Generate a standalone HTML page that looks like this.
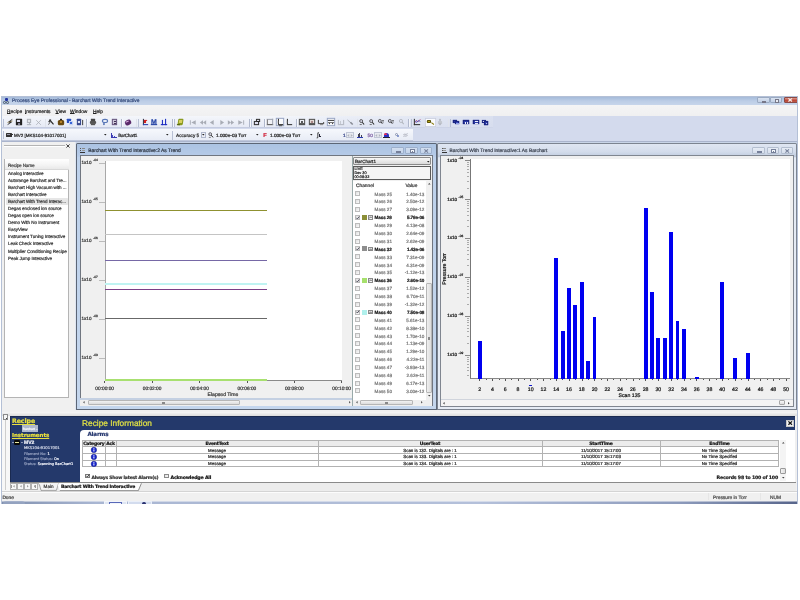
<!DOCTYPE html>
<html><head><meta charset="utf-8"><title>Process Eye Professional</title>
<style>
html,body{margin:0;padding:0;background:#fff;}
body{width:800px;height:600px;position:relative;overflow:hidden;font-family:"Liberation Sans",sans-serif;font-size:4.8px;color:#333;-webkit-text-stroke:0.2px;text-rendering:geometricPrecision;}
div{position:absolute;box-sizing:border-box;}
.t{white-space:nowrap;line-height:6px;margin-top:-1.94px;}
.tc{white-space:nowrap;line-height:6px;margin-top:-1.94px;transform:translateX(-50%);}
.tr{white-space:nowrap;line-height:6px;margin-top:-1.94px;transform:translateX(-100%);}
.b{font-weight:bold;}
svg{position:absolute;overflow:visible;}
</style></head><body>
<div id="app" style="left:0;top:0;width:800px;height:600px;will-change:transform;clip-path:inset(96.2px 2.3px 96px 1px);">

<div style="left:0px;top:96px;width:800px;height:408px;background:#d3daed;"></div>
<div style="left:0px;top:96px;width:800px;height:9.5px;background:linear-gradient(#9fb6d6,#bccde6 50%,#c9d7ec);"></div>
<div class="t" style="left:12px;top:100.94px;font-size:4.9px;color:#33497a;">Process Eye Professional - Barchart With Trend Interactive</div>
<div style="left:3px;top:98px;width:6px;height:6px;"><div style="left:2px;top:0;width:2.5px;height:3px;background:#2030a0;border-radius:1px"></div><div style="left:0;top:3px;width:2.5px;height:2.5px;border:0.7px solid #456;border-radius:50%"></div><div style="left:3.2px;top:3px;width:2.5px;height:2.5px;border:0.7px solid #456;border-radius:50%"></div></div>
<div style="left:757px;top:97px;width:12.6px;height:6.2px;background:linear-gradient(#d8e2f0,#c2d0e6);border:0.6px solid #9aaac2;border-radius:1px;"><div style="left:3.8px;top:2.8px;width:4.6px;height:1.8px;background:#f4f6fa;border:0.5px solid #778"></div></div>
<div style="left:769.8px;top:97px;width:12.6px;height:6.2px;background:linear-gradient(#d8e2f0,#c2d0e6);border:0.6px solid #9aaac2;border-radius:1px;"><div style="left:4px;top:1px;width:4.4px;height:3.8px;background:#e8ecf4;border:0.6px solid #778"></div></div>
<div style="left:783.6px;top:97px;width:14px;height:6.2px;background:linear-gradient(#dc9a8c,#c8584a 45%,#b84434 55%,#c05a48);border:0.6px solid #8a4a46;border-radius:1px;"></div>
<svg style="left:788.4px;top:98.3px" width="4.4" height="3.8" viewBox="0 0 4.4 3.8"><path d="M0.4 0.3L4 3.5M4 0.3L0.4 3.5" stroke="#f6f0ee" stroke-width="1.1"/></svg>
<div style="left:1px;top:105px;width:798px;height:10.8px;background:linear-gradient(#f4f4f5,#f0f0f1);"></div>
<div class="t" style="left:7px;top:111.94px;color:#222;font-size:4.9px"><span style="text-decoration:underline;text-decoration-thickness:0.45px;text-underline-offset:0.3px">R</span>ecipe</div>
<div class="t" style="left:25px;top:111.94px;color:#222;font-size:4.9px"><span style="text-decoration:underline;text-decoration-thickness:0.45px;text-underline-offset:0.3px">I</span>nstruments</div>
<div class="t" style="left:55.5px;top:111.94px;color:#222;font-size:4.9px"><span style="text-decoration:underline;text-decoration-thickness:0.45px;text-underline-offset:0.3px">V</span>iew</div>
<div class="t" style="left:70px;top:111.94px;color:#222;font-size:4.9px"><span style="text-decoration:underline;text-decoration-thickness:0.45px;text-underline-offset:0.3px">W</span>indow</div>
<div class="t" style="left:93px;top:111.94px;color:#222;font-size:4.9px"><span style="text-decoration:underline;text-decoration-thickness:0.45px;text-underline-offset:0.3px">H</span>elp</div>
<div style="left:1px;top:116.4px;width:491.5px;height:12.1px;background:linear-gradient(#f4f6fb,#e6eaf5);border-bottom:0.5px solid #c4cbe0;border-radius:0 0 1px 0"></div>
<div style="left:1px;top:129px;width:412px;height:12px;background:linear-gradient(#f6f8fc,#e8ecf6);border-bottom:0.5px solid #c0c8dc;"></div>
<div style="left:1px;top:116.4px;width:491.5px;height:12.1px;background:linear-gradient(90deg,rgba(214,220,238,0) 0,rgba(214,220,238,0) 55%,rgba(210,217,236,.75) 100%)"></div>
<div style="left:2.5px;top:119px;width:0.6px;height:8px;background:#b8c0d4"></div>
<div style="left:2.5px;top:131px;width:0.6px;height:8px;background:#b8c0d4"></div>
<div style="left:9.5px;top:122.3px;width:0;height:0;transform:scale(1.05)">
<svg style="left:-3px;top:-3px" width="6" height="6" viewBox="0 0 6 6"><path d="M5.2 0.2 L1.4 3 L2.8 3.3 L0.6 5.8 L4.8 3 L3.4 2.7 Z" fill="#222" stroke="#222" stroke-width="0.25"/><path d="M0.4 3.6 L5.6 2" stroke="#8a7030" stroke-width="0.5"/></svg>
</div>
<div style="left:19px;top:122.3px;width:0;height:0;transform:scale(1.05)">
<div style="left:-2.8px;top:-2.8px;width:5.6px;height:5.6px;background:#222;border-radius:0.5px"><div style="left:1.2px;top:0.4px;width:3px;height:2px;background:#dde"></div><div style="left:1.5px;top:3.6px;width:2.4px;height:1.8px;background:#889"></div></div>
</div>
<div style="left:28.5px;top:122.3px;width:0;height:0;transform:scale(1.05)">
<div style="left:-2px;top:-2.8px;width:4px;height:3.4px;border:0.8px solid #b0b4bc;background:#e4e6ea"></div>
<div style="left:-0.4px;top:0.6px;width:0.8px;height:1.6px;background:#b0b4bc"></div>
<div style="left:-1.6px;top:2.1px;width:3.2px;height:0.7px;background:#b0b4bc"></div>
</div>
<div style="left:38px;top:122.3px;width:0;height:0;transform:scale(1.05)">
<svg style="left:-2.5px;top:-2.5px" width="5" height="5" viewBox="0 0 5 5"><path d="M0.3 0.3L4.7 4.7M4.7 0.3L0.3 4.7" stroke="#a8acb4" stroke-width="0.7"/></svg>
</div>
<div style="left:51px;top:122.3px;width:0;height:0;transform:scale(1.05)">
<svg style="left:-3px;top:-3px" width="6" height="6" viewBox="0 0 6 6"><path d="M1.5 0.8 L5.4 5.2" stroke="#222" stroke-width="1.1"/><path d="M0.3 2.6 L2.6 0.4 L3.4 1.2 L1.2 3.5Z" fill="#333"/><path d="M2.2 3 L0.6 5.6" stroke="#555" stroke-width="0.8"/></svg>
</div>
<div style="left:60.5px;top:122.3px;width:0;height:0;transform:scale(1.05)">
<div style="left:-2.8px;top:-2.2px;width:5.6px;height:5px;background:#6a4a10;border-radius:1.5px 1.5px 1px 1px"><div style="left:1.6px;top:1px;width:2.4px;height:2px;background:#c89030;border-radius:1px"></div></div>
<div style="left:-0.9px;top:-3px;width:1.8px;height:1.2px;background:#222;border-radius:0.6px"></div>
</div>
<div style="left:70px;top:122.3px;width:0;height:0;transform:scale(1.05)">
<div style="left:-2.8px;top:-3px;width:3.6px;height:4px;background:#2a50c0;border-radius:0.4px"></div>
<div style="left:-1px;top:-1px;width:3.8px;height:4px;background:#3a66d8;border:0.5px solid #c8d4f4;border-radius:0.4px"></div>
</div>
<div style="left:79.5px;top:122.3px;width:0;height:0;transform:scale(1.05)">
<div style="left:-2.8px;top:-2.6px;width:4px;height:5.4px;background:#3a4a90;border-radius:0.4px"><div style="left:0.7px;top:1.3px;width:2.6px;height:2px;background:#dfe4f4"></div></div>
<div style="left:1.6px;top:-1.8px;width:1.2px;height:4.6px;background:#444"></div>
</div>
<div style="left:92.5px;top:122.3px;width:0;height:0;transform:scale(1.05)">
<div style="left:-3px;top:-1.2px;width:6px;height:3.4px;background:#555;border-radius:1px"></div>
<div style="left:-1.8px;top:-2.8px;width:3.6px;height:2px;background:#888;border:0.5px solid #444"></div>
<div style="left:-1.8px;top:0.8px;width:3.6px;height:1.8px;background:#ccc;border:0.4px solid #555"></div>
</div>
<div style="left:105px;top:122.3px;width:0;height:0;transform:scale(1.05)">
<div style="left:-3px;top:-2.6px;width:5.6px;height:4px;border:0.8px solid #5a78b8;border-radius:50%;background:#eef2fa"></div>
<div style="left:-2.4px;top:0.8px;width:1.6px;height:1.6px;border:0.6px solid #5a78b8;border-radius:50%;background:#eef2fa"></div>
</div>
<div style="left:115px;top:122.3px;width:0;height:0;transform:scale(1.05)">
<div style="left:-2.6px;top:-2.8px;width:5px;height:5.6px;background:#d0cadc;border:0.7px solid #6a5a80"><div style="left:0.6px;top:1.2px;width:2.4px;height:0.6px;background:#403050"></div><div style="left:0.6px;top:2.6px;width:2.4px;height:0.6px;background:#403050"></div></div>
</div>
<div style="left:127.5px;top:122.3px;width:0;height:0;transform:scale(1.05)">
<div style="left:-3px;top:-2.4px;width:5.6px;height:4.6px;background:#5a2a6a;border-radius:50% 50% 40% 40%;transform:rotate(-25deg)"><div style="left:1.2px;top:1px;width:2.8px;height:1px;background:#d8b0e0"></div></div>
</div>
<div style="left:144.5px;top:122.3px;width:0;height:0;transform:scale(1.05)">
<div style="left:-2.4px;top:-2.6px;width:0.7px;height:5.4px;background:#334"></div>
<div style="left:-2.4px;top:2.2px;width:5.4px;height:0.7px;background:#2a40b0"></div>
<div style="left:-0.8px;top:-2.2px;width:1.4px;height:3.4px;background:#d02020"></div>
<div style="left:0.6px;top:-2.2px;width:1.2px;height:1.4px;background:#d02020"></div>
</div>
<div style="left:154px;top:122.3px;width:0;height:0;transform:scale(1.05)">
<div class="tc b" style="left:0px;top:0px;font-size:6.6px;color:#1a3aa0">M</div>
<div style="left:-2.8px;top:2.2px;width:5.6px;height:0.7px;background:#1a3aa0"></div>
</div>
<div style="left:163.5px;top:122.3px;width:0;height:0;transform:scale(1.05)">
<div style="left:-2.4px;top:-2px;width:1.1px;height:4.6px;background:#1a2ac0"></div>
<div style="left:0.6px;top:-2.8px;width:1.1px;height:5.4px;background:#1a2ac0"></div>
<div style="left:-3px;top:2.2px;width:6px;height:0.7px;background:#1a2ac0"></div>
</div>
<div style="left:180px;top:122.3px;width:0;height:0;transform:scale(1.05)">
<div style="left:-2.2px;top:-3px;width:4.8px;height:6px;background:#8a9a20;border-radius:1px;transform:skewX(-8deg)"><div style="left:1px;top:1px;width:2.6px;height:3.4px;background:#d8d060"></div></div>
<div style="left:-3px;top:1.6px;width:3px;height:1.4px;background:#5a6a10;border-radius:0.7px"></div>
</div>
<div style="left:193px;top:122.3px;width:0;height:0;transform:scale(1.05)">
<svg style="left:-3px;top:-2.5px" width="6" height="5" viewBox="0 0 6 5"><path d="M0 0.4v4.2h0.9v-4.2zM5.6 0.4L1.4 2.5L5.6 4.6Z" fill="#a9adb6"/></svg>
</div>
<div style="left:202.5px;top:122.3px;width:0;height:0;transform:scale(1.05)">
<svg style="left:-3px;top:-2.5px" width="6" height="5" viewBox="0 0 6 5"><path d="M3 0.4L0 2.5L3 4.6ZM6 0.4L3 2.5L6 4.6Z" fill="#a9adb6"/></svg>
</div>
<div style="left:212px;top:122.3px;width:0;height:0;transform:scale(1.05)">
<svg style="left:-3px;top:-2.5px" width="6" height="5" viewBox="0 0 6 5"><path d="M4.6 0.2L1 2.5L4.6 4.8Z" fill="#a9adb6"/></svg>
</div>
<div style="left:221.5px;top:122.3px;width:0;height:0;transform:scale(1.05)">
<svg style="left:-3px;top:-2.5px" width="6" height="5" viewBox="0 0 6 5"><path d="M1.4 0.2L5 2.5L1.4 4.8Z" fill="#a9adb6"/></svg>
</div>
<div style="left:231px;top:122.3px;width:0;height:0;transform:scale(1.05)">
<svg style="left:-3px;top:-2.5px" width="6" height="5" viewBox="0 0 6 5"><path d="M0 0.4L3 2.5L0 4.6ZM3 0.4L6 2.5L3 4.6Z" fill="#a9adb6"/></svg>
</div>
<div style="left:240.5px;top:122.3px;width:0;height:0;transform:scale(1.05)">
<svg style="left:-3px;top:-2.5px" width="6" height="5" viewBox="0 0 6 5"><path d="M5.1 0.4v4.2h0.9v-4.2zM0.4 0.4L4.6 2.5L0.4 4.6Z" fill="#a9adb6"/></svg>
</div>
<div style="left:257px;top:122.3px;width:0;height:0;transform:scale(1.05)">
<div style="left:-2.8px;top:-0.6px;width:4.6px;height:3.2px;border:0.65px solid #333;background:#dde"></div>
<div style="left:-1.2px;top:-2.6px;width:4px;height:2.6px;border:0.65px solid #333;background:#eef"><div style="left:0.6px;top:0.4px;width:1.6px;height:0.6px;background:#222"></div></div>
</div>
<div style="left:270px;top:122.3px;width:0;height:0;transform:scale(1.05)">
<div style="left:-2.8px;top:-2.6px;width:5.6px;height:5.2px;border:0.6px solid #a0a5b2;border-bottom:0.7px solid #555;border-left:0.7px solid #777;background:#f0f1f6"></div>
</div>
<div style="left:279.5px;top:122.3px;width:0;height:0;transform:scale(1.05)">
<div style="left:-4px;top:-4.2px;width:8.4px;height:8.6px;border:0.5px solid #9aa6c4;background:#fafbfe"></div>
<div style="left:-1.8px;top:-2.8px;width:0.7px;height:5px;background:#333"></div>
<div style="left:-1.8px;top:1.6px;width:4.6px;height:0.7px;background:#333"></div>
<div style="left:-2.5px;top:-1.4px;width:0.8px;height:0.5px;background:#555"></div>
<div style="left:-2.5px;top:0.2px;width:0.8px;height:0.5px;background:#555"></div>
<div style="left:-1px;top:3px;width:3px;height:0.6px;background:#555"></div>
</div>
<div style="left:289px;top:122.3px;width:0;height:0;transform:scale(1.05)">
<div style="left:-1.8px;top:-2.8px;width:0.7px;height:5px;background:#333"></div>
<div style="left:-1.8px;top:1.6px;width:4.6px;height:0.7px;background:#333"></div>
<div style="left:-2.5px;top:-1.4px;width:0.8px;height:0.5px;background:#555"></div>
<div style="left:-2.5px;top:0.2px;width:0.8px;height:0.5px;background:#555"></div>
</div>
<div style="left:301.5px;top:122.3px;width:0;height:0;transform:scale(1.05)">
<div style="left:-2.8px;top:-2.8px;width:5.6px;height:4.4px;border:0.6px solid #555;background:#eceef4"><div style="left:1.2px;top:0.5px;width:2px;height:2px;border:0.5px solid #333;border-radius:50%"></div></div>
<div style="left:-3px;top:2px;width:6px;height:0.6px;background:#444"></div>
</div>
<div style="left:311.5px;top:122.3px;width:0;height:0;transform:scale(1.05)">
<div style="left:-2.8px;top:-2.8px;width:5.6px;height:5px;border:0.6px solid #555;background:#e4dcd8"><div style="left:1.2px;top:0.6px;width:1.8px;height:2.4px;background:#a88"></div></div>
<div style="left:-3px;top:2.2px;width:6px;height:0.6px;background:#444"></div>
</div>
<div style="left:321px;top:122.3px;width:0;height:0;transform:scale(1.05)">
<div style="left:-2.8px;top:-2.4px;width:0.6px;height:3.4px;background:#444"></div>
<div style="left:-2.8px;top:0.6px;width:5.8px;height:0.6px;background:#555"></div>
<div style="left:2.4px;top:-0.4px;width:0.6px;height:1.4px;background:#555"></div>
<div style="left:-1.4px;top:2px;width:3px;height:0.6px;background:#888"></div>
</div>
<div style="left:331px;top:122.3px;width:0;height:0;transform:scale(1.05)">
<div style="left:-4.4px;top:-4.2px;width:8.8px;height:8.6px;border:0.5px solid #9aa6c4;background:#fafbfe"></div>
<div style="left:-3px;top:-2px;width:6px;height:0.7px;background:#444"></div>
<div style="left:-3px;top:-0.5px;width:6px;height:0.6px;background:#777"></div>
<div style="left:-2.4px;top:1.4px;width:1.5px;height:1.1px;background:#333"></div>
<div style="left:0.7px;top:1.4px;width:1.5px;height:1.1px;background:#333"></div>
</div>
<div style="left:340.5px;top:122.3px;width:0;height:0;transform:scale(1.05)">
<div style="left:-2.6px;top:-2px;width:1px;height:3.6px;background:#b4b8c2"></div>
<div style="left:-0.6px;top:-1px;width:1px;height:2.6px;background:#c4c8d0"></div>
<div style="left:1.6px;top:-2.4px;width:1px;height:4px;background:#b4b8c2"></div>
<div style="left:-3px;top:1.6px;width:6px;height:0.7px;background:#b4b8c2"></div>
</div>
<div style="left:350px;top:122.3px;width:0;height:0;transform:scale(1.05)">
<svg style="left:-3px;top:-3px" width="6" height="6" viewBox="0 0 6 6"><path d="M0.6 1 L4 4" stroke="#a0a4ae" stroke-width="0.8"/><path d="M3.4 3.2 L5.6 5.4" stroke="#888c96" stroke-width="1.5"/></svg>
</div>
<div style="left:362px;top:122.3px;width:0;height:0;transform:scale(1.05)">
<svg style="left:-3px;top:-3px" width="6" height="6" viewBox="0 0 6 6"><circle cx="2.2" cy="2.1" r="1.4" fill="#dde" stroke="#333" stroke-width="0.7"/><path d="M3.2 3.2L5 5.4" stroke="#222" stroke-width="1"/><path d="M0.8 5.4h2" stroke="#333" stroke-width="0.6"/></svg>
</div>
<div style="left:371.5px;top:122.3px;width:0;height:0;transform:scale(1.05)">
<svg style="left:-3px;top:-3px" width="6" height="6" viewBox="0 0 6 6"><circle cx="2.2" cy="2.1" r="1.4" fill="#dde" stroke="#333" stroke-width="0.7"/><path d="M3.2 3.2L5 5.4" stroke="#222" stroke-width="1"/><path d="M0.8 5.4h2" stroke="#333" stroke-width="0.6"/></svg>
</div>
<div style="left:381px;top:122.3px;width:0;height:0;transform:scale(1.05)">
<svg style="left:-3px;top:-3px" width="6" height="6" viewBox="0 0 6 6"><circle cx="1.9" cy="2" r="1.4" fill="#dde" stroke="#333" stroke-width="0.7"/><path d="M3 3L4.2 4.6" stroke="#222" stroke-width="0.9"/><path d="M4 1.6h1.8M4.9 1.6v2.6" stroke="#444" stroke-width="0.6"/></svg>
</div>
<div style="left:391px;top:122.3px;width:0;height:0;transform:scale(1.05)">
<svg style="left:-3px;top:-3px" width="6" height="6" viewBox="0 0 6 6"><circle cx="1.9" cy="2" r="1.4" fill="#dde" stroke="#333" stroke-width="0.7"/><path d="M3 3L4.2 4.6" stroke="#222" stroke-width="0.9"/><path d="M4 1.6h1.8M4.9 1.6v2.6" stroke="#444" stroke-width="0.6"/></svg>
</div>
<div style="left:402px;top:122.3px;width:0;height:0;transform:scale(1.05)">
<svg style="left:-3px;top:-3px" width="6" height="6" viewBox="0 0 6 6"><circle cx="2" cy="2" r="1.5" fill="none" stroke="#b0b4bc" stroke-width="0.8"/><path d="M3 3L4.6 5" stroke="#b0b4bc" stroke-width="1"/></svg>
</div>
<div style="left:417px;top:122.3px;width:0;height:0;transform:scale(1.05)">
<div style="left:-3px;top:-2.8px;width:0.8px;height:5.6px;background:#333"></div>
<div style="left:-3px;top:2px;width:6.4px;height:0.8px;background:#333"></div>
<svg style="left:-2.2px;top:-2.6px" width="5.6" height="4.6" viewBox="0 0 5.6 4.6"><path d="M0.2 3.6L1.6 1.4L2.8 3L5.2 0.4" fill="none" stroke="#b03060" stroke-width="0.7"/><path d="M0.2 2L1.8 3.4L3.4 1.6L5.2 2.6" fill="none" stroke="#3050c0" stroke-width="0.7"/></svg>
</div>
<div style="left:430px;top:122.3px;width:0;height:0;transform:scale(1.05)">
<div style="left:-5.5px;top:-4.4px;width:11.5px;height:9px;border:0.6px solid #c8cede;background:#fafbfe"></div>
<div style="left:-2.8px;top:-2.2px;width:4px;height:3.6px;background:#b8a818;border:0.7px solid #5a5208;border-radius:1px"></div>
<div style="left:0.6px;top:0.6px;width:3px;height:1.2px;background:#8a7c10;transform:rotate(35deg)"></div>
</div>
<div style="left:440px;top:122.3px;width:0;height:0;transform:scale(1.05)">
<div style="left:-0.9px;top:-2.6px;width:1.8px;height:1.8px;background:#b8bcc6;border-radius:50%"></div>
<div style="left:-1.6px;top:-0.7px;width:3.2px;height:2.2px;background:#c4c8d0;border-radius:0.8px 0.8px 0 0"></div>
<div style="left:-1.3px;top:1.4px;width:1.1px;height:1.4px;background:#b8bcc6"></div>
<div style="left:0.2px;top:1.4px;width:1.1px;height:1.4px;background:#b8bcc6"></div>
</div>
<div style="left:456px;top:122.3px;width:0;height:0;transform:scale(1.05)">
<div style="left:-2.6px;top:-2.4px;width:3.8px;height:3.2px;background:#2a3aa8;border:0.4px solid #1a2480"></div>
<div style="left:-1.2px;top:-1px;width:4px;height:3.4px;background:#3a4cc0;border:0.5px solid #1a2480"><div style="left:0.3px;top:0.9px;width:2.4px;height:1.3px;background:#9aa8ea"></div></div>
</div>
<div style="left:466px;top:122.3px;width:0;height:0;transform:scale(1.05)">
<div style="left:-2.6px;top:-2.3px;width:5.2px;height:4.7px;background:#2a3aa8;border:0.5px solid #1a2480"><div style="left:0.3px;top:0.9px;width:1.7px;height:2.5px;background:#eef1fc"></div><div style="left:2.3px;top:0.9px;width:1.7px;height:2.5px;background:#eef1fc"></div></div>
</div>
<div style="left:475.5px;top:122.3px;width:0;height:0;transform:scale(1.05)">
<div style="left:-2.6px;top:-2.3px;width:5.2px;height:4.7px;background:#2a3aa8;border:0.5px solid #1a2480"><div style="left:0.3px;top:0.7px;width:3.6px;height:1.1px;background:#eef1fc"></div><div style="left:0.3px;top:2.3px;width:3.6px;height:1.1px;background:#eef1fc"></div></div>
</div>
<div style="left:485px;top:122.3px;width:0;height:0;transform:scale(1.05)">
<div style="left:-2.6px;top:-2.4px;width:3.6px;height:3px;background:#eef1fc;border:0.6px solid #1a2480"></div>
<div style="left:-1px;top:-0.8px;width:4px;height:3.4px;background:#2a3aa8;border:0.5px solid #1a2480"><div style="left:0.7px;top:0.7px;width:1.7px;height:1.2px;background:#c8d0f4"></div></div>
</div>
<div style="left:44.5px;top:118.5px;width:0.6px;height:8.5px;background:#b0b8cc"></div>
<div style="left:45.1px;top:118.5px;width:0.5px;height:8.5px;background:rgba(255,255,255,.6)"></div>
<div style="left:86px;top:118.5px;width:0.6px;height:8.5px;background:#b0b8cc"></div>
<div style="left:86.6px;top:118.5px;width:0.5px;height:8.5px;background:rgba(255,255,255,.6)"></div>
<div style="left:121px;top:118.5px;width:0.6px;height:8.5px;background:#b0b8cc"></div>
<div style="left:121.6px;top:118.5px;width:0.5px;height:8.5px;background:rgba(255,255,255,.6)"></div>
<div style="left:135.5px;top:118.5px;width:0.6px;height:8.5px;background:#b0b8cc"></div>
<div style="left:136.1px;top:118.5px;width:0.5px;height:8.5px;background:rgba(255,255,255,.6)"></div>
<div style="left:172px;top:118.5px;width:0.6px;height:8.5px;background:#b0b8cc"></div>
<div style="left:172.6px;top:118.5px;width:0.5px;height:8.5px;background:rgba(255,255,255,.6)"></div>
<div style="left:249px;top:118.5px;width:0.6px;height:8.5px;background:#b0b8cc"></div>
<div style="left:249.6px;top:118.5px;width:0.5px;height:8.5px;background:rgba(255,255,255,.6)"></div>
<div style="left:264px;top:118.5px;width:0.6px;height:8.5px;background:#b0b8cc"></div>
<div style="left:264.6px;top:118.5px;width:0.5px;height:8.5px;background:rgba(255,255,255,.6)"></div>
<div style="left:296px;top:118.5px;width:0.6px;height:8.5px;background:#b0b8cc"></div>
<div style="left:296.6px;top:118.5px;width:0.5px;height:8.5px;background:rgba(255,255,255,.6)"></div>
<div style="left:356.5px;top:118.5px;width:0.6px;height:8.5px;background:#b0b8cc"></div>
<div style="left:357.1px;top:118.5px;width:0.5px;height:8.5px;background:rgba(255,255,255,.6)"></div>
<div style="left:408px;top:118.5px;width:0.6px;height:8.5px;background:#b0b8cc"></div>
<div style="left:408.6px;top:118.5px;width:0.5px;height:8.5px;background:rgba(255,255,255,.6)"></div>
<div style="left:447.5px;top:118.5px;width:0.6px;height:8.5px;background:#b0b8cc"></div>
<div style="left:448.1px;top:118.5px;width:0.5px;height:8.5px;background:rgba(255,255,255,.6)"></div>
<div style="left:137.5px;top:118.5px;width:0.6px;height:8.5px;background:#b8c0d4"></div>
<div style="left:174px;top:118.5px;width:0.6px;height:8.5px;background:#b8c0d4"></div>
<div style="left:251px;top:118.5px;width:0.6px;height:8.5px;background:#b8c0d4"></div>
<div style="left:410.5px;top:118.5px;width:0.6px;height:8.5px;background:#b8c0d4"></div>
<div style="left:450px;top:118.5px;width:0.6px;height:8.5px;background:#b8c0d4"></div>
<div style="left:6px;top:133px;width:6px;height:3.6px;background:#333;border-radius:0.6px"><div style="left:0.8px;top:0.8px;width:3px;height:1px;background:#99a"></div></div>
<div style="left:11.5px;top:134.2px;width:1.5px;height:1.2px;background:#333"></div>
<div class="t" style="left:14px;top:134.94px;font-size:4.5px;color:#222">MV2 [MKS104-91017001]</div>
<svg style="left:103.7px;top:134.3px" width="2.6" height="1.6" viewBox="0 0 2.6 1.6"><path d="M0 0h2.6L1.3 1.6Z" fill="#222"/></svg>
<div style="left:110.5px;top:132.6px;width:0.6px;height:4.8px;background:#3a3ab0"></div>
<div style="left:110.5px;top:137px;width:6px;height:0.6px;background:#3a3ab0"></div>
<div style="left:112.2px;top:134.6px;width:0.7px;height:2.4px;background:#4a4ac0"></div>
<div style="left:114px;top:135.6px;width:0.7px;height:1.4px;background:#4a4ac0"></div>
<div class="t" style="left:118.2px;top:134.94px;font-size:4.7px;color:#222;letter-spacing:-0.26px">BarChart1</div>
<svg style="left:166.2px;top:134.3px" width="2.6" height="1.6" viewBox="0 0 2.6 1.6"><path d="M0 0h2.6L1.3 1.6Z" fill="#222"/></svg>
<div style="left:172px;top:130.5px;width:0.6px;height:9px;background:#b8c0d4"></div>
<div class="t" style="left:176px;top:134.94px;font-size:4.7px;color:#222">Accuracy 5</div>
<div style="left:201.2px;top:132px;width:4.6px;height:6.2px;background:#eceef5;border:0.4px solid #b0b8cc"></div>
<svg style="left:202.2px;top:134.3px" width="2.6" height="1.6" viewBox="0 0 2.6 1.6"><path d="M0 0h2.6L1.3 1.6Z" fill="#222"/></svg>
<svg style="left:208px;top:132px" width="6" height="6" viewBox="0 0 6 6"><circle cx="2.2" cy="2.1" r="1.4" fill="#dde" stroke="#333" stroke-width="0.7"/><path d="M3.2 3.2L5 5.4" stroke="#222" stroke-width="1"/><path d="M0.8 5.4h2" stroke="#333" stroke-width="0.6"/></svg>
<div class="t" style="left:216px;top:134.94px;font-size:4.7px;color:#222">1.000e-03 Torr</div>
<svg style="left:256.2px;top:134.3px" width="2.6" height="1.6" viewBox="0 0 2.6 1.6"><path d="M0 0h2.6L1.3 1.6Z" fill="#222"/></svg>
<div class="t" style="left:263.2px;top:134.94px;font-size:5.6px;color:#d01830;font-weight:bold">F</div>
<div class="t" style="left:270px;top:134.94px;font-size:4.7px;color:#222">1.000e-03 Torr</div>
<svg style="left:310.2px;top:134.3px" width="2.6" height="1.6" viewBox="0 0 2.6 1.6"><path d="M0 0h2.6L1.3 1.6Z" fill="#222"/></svg>
<div class="t" style="left:317px;top:134.94px;font-size:6px;color:#222">&#8747;</div>
<div style="left:318.5px;top:134px;width:2.4px;height:2.6px;border-left:0.6px solid #223;border-bottom:0.6px solid #223"></div>
<div class="t" style="left:343px;top:134.94px;font-size:4.7px;color:#2a3a80">1</div>
<div style="left:346px;top:131.8px;width:8px;height:6.4px;background:#e8eaf1;border:0.4px solid #c0c6d6"></div>
<svg style="left:347px;top:133.5px" width="6" height="3" viewBox="0 0 6 3"><path d="M2.2 0L0.2 1.5L2.2 3ZM3.8 0L5.8 1.5L3.8 3Z" fill="#b0b4be"/></svg>
<div style="left:356.5px;top:137px;width:6px;height:0.7px;background:#2a3ab0"></div>
<div style="left:357.5px;top:134px;width:1px;height:3px;background:#445"></div>
<div style="left:359.3px;top:133px;width:1px;height:4px;background:#445"></div>
<div style="left:361px;top:135px;width:1px;height:2px;background:#445"></div>
<div class="t" style="left:367.6px;top:134.94px;font-size:4.7px;color:#7a5aa0">50</div>
<div style="left:374px;top:131.8px;width:8px;height:6.4px;background:#e8eaf1;border:0.4px solid #c0c6d6"></div>
<svg style="left:375px;top:133.5px" width="6" height="3" viewBox="0 0 6 3"><path d="M2.2 0L0.2 1.5L2.2 3ZM3.8 0L5.8 1.5L3.8 3Z" fill="#b0b4be"/></svg>
<div style="left:383.5px;top:132.6px;width:5.6px;height:5px;background:#2a30c0;border-radius:2.5px 2.5px 0 0"><div style="left:0.6px;top:0;width:3px;height:2.4px;background:#e03060;border-radius:2px 2px 0 0"></div></div>
<div style="left:383px;top:137.2px;width:6.6px;height:0.7px;background:#223"></div>
<div style="left:394.5px;top:133px;width:3px;height:3px;border:0.6px solid #8a94b0;border-radius:50%"></div>
<div style="left:396.5px;top:135px;width:2.4px;height:2.4px;background:#6a80c0;border-radius:50%"></div>
<svg style="left:403px;top:133px" width="5" height="4" viewBox="0 0 5 4"><path d="M0.4 1.6C1.4 0.4 2.4 2.4 4.6 0.6M0.4 3.4C1.4 2.2 2.4 4 4.6 2.4" fill="none" stroke="#888c98" stroke-width="0.6"/></svg>
<div style="left:1px;top:141.5px;width:798px;height:269px;background:#c9d5e8;"></div>
<div style="left:1px;top:141.2px;width:798px;height:0.7px;background:#aab4cc;"></div>
<div style="left:1px;top:142px;width:73.5px;height:268.5px;background:#f0f0f0;"></div>
<div style="left:74.5px;top:142px;width:1.5px;height:268.5px;background:#dfe6f1;"></div>
<div style="left:4px;top:144.8px;width:61px;height:0.6px;background:#b4b4b4"></div>
<div style="left:4px;top:145.8px;width:61px;height:0.5px;background:#fff"></div>
<svg style="left:66.3px;top:143.6px" width="4" height="4" viewBox="0 0 4 4"><path d="M0.4 0.4L3.6 3.6M3.6 0.4L0.4 3.6" stroke="#333" stroke-width="0.9"/></svg>
<div style="left:4.1px;top:158.8px;width:65.3px;height:239.7px;background:#fff;border:0.6px solid #b4b4b4"></div>
<div style="left:4.8px;top:159.4px;width:63.9px;height:10.8px;background:linear-gradient(#ffffff,#f4f4f4 60%,#e9e9e9);border-bottom:0.5px solid #d8d8d8"></div>
<div class="t" style="left:8px;top:164.95px;color:#444;font-size:4.7px;letter-spacing:-0.18px">Recipe Name</div>
<div class="t" style="left:8px;top:172.95px;color:#333;font-size:4.55px;letter-spacing:-0.05px">Analog Interactive</div>
<div class="t" style="left:8px;top:179.94px;color:#333;font-size:4.55px;letter-spacing:-0.05px">Autorange Barchart and Tre...</div>
<div class="t" style="left:8px;top:186.95px;color:#333;font-size:4.55px;letter-spacing:-0.05px">Barchart High Vacuum with ...</div>
<div class="t" style="left:8px;top:193.94px;color:#333;font-size:4.55px;letter-spacing:-0.05px">Barchart Interactive</div>
<div style="left:5.5px;top:198.16px;width:62px;height:6.9px;background:#e6e6e6;border-radius:0.8px"></div>
<div class="t" style="left:8px;top:200.95px;color:#333;font-size:4.55px;letter-spacing:-0.05px">Barchart With Trend Interac...</div>
<div class="t" style="left:8px;top:207.94px;color:#333;font-size:4.55px;letter-spacing:-0.05px">Degas enclosed ion source</div>
<div class="t" style="left:8px;top:214.95px;color:#333;font-size:4.55px;letter-spacing:-0.05px">Degas open ion source</div>
<div class="t" style="left:8px;top:221.95px;color:#333;font-size:4.55px;letter-spacing:-0.05px">Demo With No Instrument</div>
<div class="t" style="left:8px;top:228.94px;color:#333;font-size:4.55px;letter-spacing:-0.05px">EasyView</div>
<div class="t" style="left:8px;top:235.95px;color:#333;font-size:4.55px;letter-spacing:-0.05px">Instrument Tuning Interactive</div>
<div class="t" style="left:8px;top:242.94px;color:#333;font-size:4.55px;letter-spacing:-0.05px">Leak Check Interactive</div>
<div class="t" style="left:8px;top:250.95px;color:#333;font-size:4.55px;letter-spacing:-0.05px">Multiplier Conditioning Recipe</div>
<div class="t" style="left:8px;top:257.94px;color:#333;font-size:4.55px;letter-spacing:-0.05px">Peak Jump Interactive</div>
<div style="left:76px;top:142.5px;width:360.5px;height:267.2px;background:linear-gradient(#abc3e2 0,#b6cbe8 4.6%,#bdd1eb 5%,#c4d6ed);border:0.55px solid #5c6676;border-radius:1.5px 1.5px 0.5px 0.5px;box-shadow:0 0 0.6px rgba(255,255,255,.8) inset"></div>
<div style="left:80.2px;top:147.7px;width:5px;height:5.4px;"><div style="left:0;top:0.2px;width:0.9px;height:0.8px;background:#555"></div><div style="left:0;top:2px;width:0.9px;height:0.8px;background:#555"></div><div style="left:1.8px;top:0.2px;width:3.2px;height:0.7px;background:#888"></div><div style="left:1.8px;top:2px;width:3.2px;height:0.7px;background:#999"></div><div style="left:0;top:3.9px;width:5px;height:1.3px;background:#333"></div></div>
<div class="t" style="left:88.2px;top:150.94px;font-size:4.93px;color:#2c3440">Barchart With Trend Interactive:2 As Trend</div>
<div style="left:437.3px;top:142.5px;width:359.5px;height:267.7px;background:linear-gradient(#dfe6f2 0,#d3dceb 3%,#bfcbde 4.8%,#e4eaf4 5.2%,#e6ecf5);border:0.55px solid #7c8490;border-radius:1.5px 1.5px 0.5px 0.5px;box-shadow:0 0 0.6px rgba(255,255,255,.8) inset"></div>
<div style="left:441.5px;top:147.7px;width:5px;height:5.4px;"><div style="left:0;top:0.2px;width:0.9px;height:0.8px;background:#555"></div><div style="left:0;top:2px;width:0.9px;height:0.8px;background:#555"></div><div style="left:1.8px;top:0.2px;width:3.2px;height:0.7px;background:#888"></div><div style="left:1.8px;top:2px;width:3.2px;height:0.7px;background:#999"></div><div style="left:0;top:3.9px;width:5px;height:1.3px;background:#333"></div></div>
<div class="t" style="left:449.5px;top:150.94px;font-size:4.88px;color:#3a4250">Barchart With Trend Interactive:1 As Barchart</div>
<div style="left:391.3px;top:147.3px;width:12.8px;height:6.4px;background:linear-gradient(#d3dff0,#c3d3ea);border:0.6px solid #9db0cc;border-radius:1px"><div style="left:3.6px;top:2.8px;width:5px;height:2px;background:#f4f7fb;border:0.6px solid #76809a"></div></div>
<div style="left:405.40000000000003px;top:147.3px;width:12.8px;height:6.4px;background:linear-gradient(#d3dff0,#c3d3ea);border:0.6px solid #9db0cc;border-radius:1px"><div style="left:3.8px;top:0.8px;width:4.6px;height:4.2px;background:#f4f7fb;border:0.6px solid #76809a"></div><div style="left:5.2px;top:2.5px;width:1.8px;height:0.8px;background:#76809a"></div></div>
<div style="left:419.5px;top:147.3px;width:12.8px;height:6.4px;background:linear-gradient(#d3dff0,#c3d3ea);border:0.6px solid #9db0cc;border-radius:1px"></div>
<svg style="left:423.7px;top:148.5px" width="4.4" height="4" viewBox="0 0 4.4 4"><path d="M0.4 0.3L4 3.7M4 0.3L0.4 3.7" stroke="#76809a" stroke-width="1.1"/></svg>
<div style="left:752.4px;top:147.3px;width:12.8px;height:6.4px;background:linear-gradient(#e6ecf5,#d6deec);border:0.6px solid #b4bfd0;border-radius:1px"><div style="left:3.6px;top:2.8px;width:5px;height:2px;background:#f4f7fb;border:0.6px solid #76809a"></div></div>
<div style="left:766.4999999999999px;top:147.3px;width:12.8px;height:6.4px;background:linear-gradient(#e6ecf5,#d6deec);border:0.6px solid #b4bfd0;border-radius:1px"><div style="left:3.8px;top:0.8px;width:4.6px;height:4.2px;background:#f4f7fb;border:0.6px solid #76809a"></div><div style="left:5.2px;top:2.5px;width:1.8px;height:0.8px;background:#76809a"></div></div>
<div style="left:780.6px;top:147.3px;width:12.8px;height:6.4px;background:linear-gradient(#e6ecf5,#d6deec);border:0.6px solid #b4bfd0;border-radius:1px"></div>
<svg style="left:784.8000000000001px;top:148.5px" width="4.4" height="4" viewBox="0 0 4.4 4"><path d="M0.4 0.3L4 3.7M4 0.3L0.4 3.7" stroke="#76809a" stroke-width="1.1"/></svg>
<div style="left:79.7px;top:155.4px;width:353px;height:250.8px;background:#f0f0f0;border:0.6px solid #707680"></div>
<div style="left:104.5px;top:161.2px;width:237px;height:220px;background:#fff;border-left:0.6px solid #a8a8a8;border-bottom:0.6px solid #8a8a8a"></div>
<div class="t" style="left:81.5px;top:161.94px;font-size:4.6px;color:#333">1x10</div>
<div class="t" style="left:93.2px;top:158.94px;font-size:3.2px;color:#333">-04</div>
<div style="left:99px;top:162.5px;width:5.5px;height:0.5px;background:#bbb"></div>
<div class="t" style="left:81.5px;top:200.94px;font-size:4.6px;color:#333">1x10</div>
<div class="t" style="left:93.2px;top:197.94px;font-size:3.2px;color:#333">-05</div>
<div style="left:99px;top:201.5px;width:5.5px;height:0.5px;background:#bbb"></div>
<div class="t" style="left:81.5px;top:239.94px;font-size:4.6px;color:#333">1x10</div>
<div class="t" style="left:93.2px;top:236.94px;font-size:3.2px;color:#333">-06</div>
<div style="left:99px;top:240.5px;width:5.5px;height:0.5px;background:#bbb"></div>
<div class="t" style="left:81.5px;top:278.94px;font-size:4.6px;color:#333">1x10</div>
<div class="t" style="left:93.2px;top:275.94px;font-size:3.2px;color:#333">-07</div>
<div style="left:99px;top:279.5px;width:5.5px;height:0.5px;background:#bbb"></div>
<div class="t" style="left:81.5px;top:317.94px;font-size:4.6px;color:#333">1x10</div>
<div class="t" style="left:93.2px;top:314.94px;font-size:3.2px;color:#333">-08</div>
<div style="left:99px;top:318.5px;width:5.5px;height:0.5px;background:#bbb"></div>
<div class="t" style="left:81.5px;top:356.94px;font-size:4.6px;color:#333">1x10</div>
<div class="t" style="left:93.2px;top:353.94px;font-size:3.2px;color:#333">-09</div>
<div style="left:99px;top:357.5px;width:5.5px;height:0.5px;background:#bbb"></div>
<div style="left:104.8px;top:210.2px;width:162.5px;height:1px;background:#8f9130"></div>
<div style="left:104.8px;top:233.8px;width:162.5px;height:0.9px;background:#c4c4c4"></div>
<div style="left:104.8px;top:259.8px;width:162.5px;height:1px;background:#7668a6"></div>
<div style="left:104.8px;top:283.0px;width:162.5px;height:1.6px;background:#c0f4f2"></div>
<div style="left:104.8px;top:288.7px;width:162.5px;height:1.3px;background:#7a3f86"></div>
<div style="left:104.8px;top:317.9px;width:162.5px;height:0.9px;background:#686868"></div>
<div style="left:104.8px;top:379.0px;width:162.5px;height:1.6px;background:#a8e070"></div>
<div class="tc" style="left:104.7px;top:388.94px;font-size:4.8px;color:#333">00:00:00</div>
<div style="left:104.4px;top:381px;width:0.6px;height:1.6px;background:#555"></div>
<div class="tc" style="left:152.1px;top:388.94px;font-size:4.8px;color:#333">00:02:00</div>
<div style="left:151.79999999999998px;top:381px;width:0.6px;height:1.6px;background:#555"></div>
<div class="tc" style="left:199.5px;top:388.94px;font-size:4.8px;color:#333">00:04:00</div>
<div style="left:199.2px;top:381px;width:0.6px;height:1.6px;background:#555"></div>
<div class="tc" style="left:246.89999999999998px;top:388.94px;font-size:4.8px;color:#333">00:06:00</div>
<div style="left:246.59999999999997px;top:381px;width:0.6px;height:1.6px;background:#555"></div>
<div class="tc" style="left:294.3px;top:388.94px;font-size:4.8px;color:#333">00:08:00</div>
<div style="left:294.0px;top:381px;width:0.6px;height:1.6px;background:#555"></div>
<div class="tc" style="left:341.7px;top:388.94px;font-size:4.8px;color:#333">00:10:00</div>
<div style="left:341.4px;top:381px;width:0.6px;height:1.6px;background:#555"></div>
<div class="tc" style="left:223px;top:393.94px;font-size:5.1px;color:#333">Elapsed Time</div>
<div style="left:80.3px;top:397.6px;width:272px;height:2px;background:#c4d0e2"></div>
<div style="left:80.3px;top:399.6px;width:272px;height:6.2px;background:#efefef"></div>
<div style="left:87.5px;top:400.1px;width:152.5px;height:5.3px;background:linear-gradient(#f2f2f2,#dcdcdc);border:0.5px solid #b6b6b6;border-radius:1px"></div>
<svg style="left:82.7px;top:401.4px" width="1.6" height="2.6" viewBox="0 0 1.6 2.6"><path d="M1.6 0L0 1.3L1.6 2.6Z" fill="#555"/></svg>
<svg style="left:348.7px;top:401.4px" width="1.6" height="2.6" viewBox="0 0 1.6 2.6"><path d="M0 0L1.6 1.3L0 2.6Z" fill="#555"/></svg>
<div style="left:161.9px;top:401.6px;width:0.5px;height:2.4px;background:#888"></div>
<div style="left:163.0px;top:401.6px;width:0.5px;height:2.4px;background:#888"></div>
<div style="left:164.1px;top:401.6px;width:0.5px;height:2.4px;background:#888"></div>
<div style="left:352.3px;top:156px;width:80.2px;height:250px;background:#f0f0f0;border-left:0.6px solid #9aa"></div>
<div style="left:353px;top:157.2px;width:78.4px;height:8px;background:linear-gradient(#f6f6f6,#e9e9e9 50%,#dadada);border:0.6px solid #8a8a8a;border-radius:1px"></div>
<div class="t" style="left:355px;top:160.95px;font-size:4.6px;color:#222">BarChart1</div>
<svg style="left:427.0px;top:160.6px" width="2.6" height="1.6" viewBox="0 0 2.6 1.6"><path d="M0 0L1.3 1.6L2.6 0Z" fill="#222"/></svg>
<div style="left:353px;top:165.6px;width:78.2px;height:14.4px;background:#f5f5f5;border:0.8px solid #5a5a5a;"></div>
<div class="t" style="left:354.5px;top:168.40px;font-size:3.8px;color:#222;line-height:4px;margin-top:-1.4px">LIVE</div>
<div class="t" style="left:354.5px;top:172.40px;font-size:3.8px;color:#222;line-height:4px;margin-top:-1.4px">Dev 30</div>
<div class="t" style="left:354.5px;top:176.40px;font-size:3.8px;color:#222;line-height:4px;margin-top:-1.4px">00:08:32</div>
<div style="left:353px;top:181px;width:79.4px;height:218.5px;background:#fff"></div>
<div class="t" style="left:356px;top:185.94px;font-size:4.8px;color:#333">Channel</div>
<div class="t" style="left:405.5px;top:185.94px;font-size:4.8px;color:#333">Value</div>
<div style="left:355px;top:191.3px;width:5px;height:5px;background:linear-gradient(135deg,#dedede,#fcfcfc);border:0.5px solid #bcbcbc"></div>
<div class="t" style="left:374.6px;top:193.95px;font-size:4.6px;color:#777">Mass 25</div>
<div class="tr" style="left:424.3px;top:193.95px;font-size:4.6px;color:#777">1.40e-13</div>
<div style="left:355px;top:199.184px;width:5px;height:5px;background:linear-gradient(135deg,#dedede,#fcfcfc);border:0.5px solid #bcbcbc"></div>
<div class="t" style="left:374.6px;top:200.94px;font-size:4.6px;color:#777">Mass 26</div>
<div class="tr" style="left:424.3px;top:200.94px;font-size:4.6px;color:#777">2.50e-12</div>
<div style="left:355px;top:207.068px;width:5px;height:5px;background:linear-gradient(135deg,#dedede,#fcfcfc);border:0.5px solid #bcbcbc"></div>
<div class="t" style="left:374.6px;top:208.95px;font-size:4.6px;color:#777">Mass 27</div>
<div class="tr" style="left:424.3px;top:208.95px;font-size:4.6px;color:#777">3.09e-12</div>
<div style="left:355px;top:214.95200000000003px;width:5px;height:5px;background:linear-gradient(135deg,#dedede,#fcfcfc);border:0.5px solid #bcbcbc"></div>
<svg style="left:355.8px;top:215.55200000000002px" width="3.6" height="3.6" viewBox="0 0 3.6 3.6"><path d="M0.4 1.8L1.4 3L3.3 0.4" fill="none" stroke="#334" stroke-width="0.8"/></svg>
<div style="left:362.2px;top:214.95200000000003px;width:5px;height:5px;background:#8c8f38"></div>
<div style="left:368.4px;top:215.05200000000002px;width:4.8px;height:4.8px;background:#f6f6f6;border:0.5px solid #8a8a8a"></div>
<svg style="left:369.1px;top:216.05200000000002px" width="3.4" height="3" viewBox="0 0 3.4 3"><path d="M0.2 2.6L1.2 0.6L2 2L3.2 0.4" fill="none" stroke="#444" stroke-width="0.55"/></svg>
<div class="t" style="left:374.6px;top:216.94px;font-size:4.6px;color:#1a1a1a;font-weight:bold;letter-spacing:-0.1px">Mass 28</div>
<div class="tr b" style="left:424.3px;top:216.94px;font-size:4.6px;color:#1a1a1a;letter-spacing:-0.1px">5.78e-06</div>
<div style="left:355px;top:222.836px;width:5px;height:5px;background:linear-gradient(135deg,#dedede,#fcfcfc);border:0.5px solid #bcbcbc"></div>
<div class="t" style="left:374.6px;top:224.95px;font-size:4.6px;color:#777">Mass 29</div>
<div class="tr" style="left:424.3px;top:224.95px;font-size:4.6px;color:#777">4.13e-08</div>
<div style="left:355px;top:230.72px;width:5px;height:5px;background:linear-gradient(135deg,#dedede,#fcfcfc);border:0.5px solid #bcbcbc"></div>
<div class="t" style="left:374.6px;top:232.94px;font-size:4.6px;color:#777">Mass 30</div>
<div class="tr" style="left:424.3px;top:232.94px;font-size:4.6px;color:#777">2.64e-09</div>
<div style="left:355px;top:238.604px;width:5px;height:5px;background:linear-gradient(135deg,#dedede,#fcfcfc);border:0.5px solid #bcbcbc"></div>
<div class="t" style="left:374.6px;top:240.94px;font-size:4.6px;color:#777">Mass 31</div>
<div class="tr" style="left:424.3px;top:240.94px;font-size:4.6px;color:#777">2.62e-09</div>
<div style="left:355px;top:246.48800000000003px;width:5px;height:5px;background:linear-gradient(135deg,#dedede,#fcfcfc);border:0.5px solid #bcbcbc"></div>
<svg style="left:355.8px;top:247.08800000000002px" width="3.6" height="3.6" viewBox="0 0 3.6 3.6"><path d="M0.4 1.8L1.4 3L3.3 0.4" fill="none" stroke="#334" stroke-width="0.8"/></svg>
<div style="left:362.2px;top:246.48800000000003px;width:5px;height:5px;background:#8e8e8e"></div>
<div style="left:368.4px;top:246.58800000000002px;width:4.8px;height:4.8px;background:#f6f6f6;border:0.5px solid #8a8a8a"></div>
<svg style="left:369.1px;top:247.58800000000002px" width="3.4" height="3" viewBox="0 0 3.4 3"><path d="M0.2 2.6L1.2 0.6L2 2L3.2 0.4" fill="none" stroke="#444" stroke-width="0.55"/></svg>
<div class="t" style="left:374.6px;top:248.95px;font-size:4.6px;color:#1a1a1a;font-weight:bold;letter-spacing:-0.1px">Mass 32</div>
<div class="tr b" style="left:424.3px;top:248.95px;font-size:4.6px;color:#1a1a1a;letter-spacing:-0.1px">1.43e-06</div>
<div style="left:355px;top:254.37199999999999px;width:5px;height:5px;background:linear-gradient(135deg,#dedede,#fcfcfc);border:0.5px solid #bcbcbc"></div>
<div class="t" style="left:374.6px;top:256.94px;font-size:4.6px;color:#777">Mass 33</div>
<div class="tr" style="left:424.3px;top:256.94px;font-size:4.6px;color:#777">7.31e-09</div>
<div style="left:355px;top:262.256px;width:5px;height:5px;background:linear-gradient(135deg,#dedede,#fcfcfc);border:0.5px solid #bcbcbc"></div>
<div class="t" style="left:374.6px;top:264.95px;font-size:4.6px;color:#777">Mass 34</div>
<div class="tr" style="left:424.3px;top:264.95px;font-size:4.6px;color:#777">4.31e-09</div>
<div style="left:355px;top:270.14px;width:5px;height:5px;background:linear-gradient(135deg,#dedede,#fcfcfc);border:0.5px solid #bcbcbc"></div>
<div class="t" style="left:374.6px;top:271.94px;font-size:4.6px;color:#777">Mass 35</div>
<div class="tr" style="left:424.3px;top:271.94px;font-size:4.6px;color:#777">-1.12e-13</div>
<div style="left:355px;top:278.024px;width:5px;height:5px;background:linear-gradient(135deg,#dedede,#fcfcfc);border:0.5px solid #bcbcbc"></div>
<svg style="left:355.8px;top:278.624px" width="3.6" height="3.6" viewBox="0 0 3.6 3.6"><path d="M0.4 1.8L1.4 3L3.3 0.4" fill="none" stroke="#334" stroke-width="0.8"/></svg>
<div style="left:362.2px;top:278.024px;width:5px;height:5px;background:#a6e06c"></div>
<div style="left:368.4px;top:278.124px;width:4.8px;height:4.8px;background:#f6f6f6;border:0.5px solid #8a8a8a"></div>
<svg style="left:369.1px;top:279.124px" width="3.4" height="3" viewBox="0 0 3.4 3"><path d="M0.2 2.6L1.2 0.6L2 2L3.2 0.4" fill="none" stroke="#444" stroke-width="0.55"/></svg>
<div class="t" style="left:374.6px;top:279.95px;font-size:4.6px;color:#1a1a1a;font-weight:bold;letter-spacing:-0.1px">Mass 36</div>
<div class="tr b" style="left:424.3px;top:279.95px;font-size:4.6px;color:#1a1a1a;letter-spacing:-0.1px">2.60e-10</div>
<div style="left:355px;top:285.908px;width:5px;height:5px;background:linear-gradient(135deg,#dedede,#fcfcfc);border:0.5px solid #bcbcbc"></div>
<div class="t" style="left:374.6px;top:287.95px;font-size:4.6px;color:#777">Mass 37</div>
<div class="tr" style="left:424.3px;top:287.95px;font-size:4.6px;color:#777">1.52e-12</div>
<div style="left:355px;top:293.792px;width:5px;height:5px;background:linear-gradient(135deg,#dedede,#fcfcfc);border:0.5px solid #bcbcbc"></div>
<div class="t" style="left:374.6px;top:295.94px;font-size:4.6px;color:#777">Mass 38</div>
<div class="tr" style="left:424.3px;top:295.94px;font-size:4.6px;color:#777">6.70e-11</div>
<div style="left:355px;top:301.676px;width:5px;height:5px;background:linear-gradient(135deg,#dedede,#fcfcfc);border:0.5px solid #bcbcbc"></div>
<div class="t" style="left:374.6px;top:303.95px;font-size:4.6px;color:#777">Mass 39</div>
<div class="tr" style="left:424.3px;top:303.95px;font-size:4.6px;color:#777">-1.32e-12</div>
<div style="left:355px;top:309.56px;width:5px;height:5px;background:linear-gradient(135deg,#dedede,#fcfcfc);border:0.5px solid #bcbcbc"></div>
<svg style="left:355.8px;top:310.16px" width="3.6" height="3.6" viewBox="0 0 3.6 3.6"><path d="M0.4 1.8L1.4 3L3.3 0.4" fill="none" stroke="#334" stroke-width="0.8"/></svg>
<div style="left:362.2px;top:309.56px;width:5px;height:5px;background:#b0f0ec"></div>
<div style="left:368.4px;top:309.66px;width:4.8px;height:4.8px;background:#f6f6f6;border:0.5px solid #8a8a8a"></div>
<svg style="left:369.1px;top:310.66px" width="3.4" height="3" viewBox="0 0 3.4 3"><path d="M0.2 2.6L1.2 0.6L2 2L3.2 0.4" fill="none" stroke="#444" stroke-width="0.55"/></svg>
<div class="t" style="left:374.6px;top:311.94px;font-size:4.6px;color:#1a1a1a;font-weight:bold;letter-spacing:-0.1px">Mass 40</div>
<div class="tr b" style="left:424.3px;top:311.94px;font-size:4.6px;color:#1a1a1a;letter-spacing:-0.1px">7.50e-08</div>
<div style="left:355px;top:317.44399999999996px;width:5px;height:5px;background:linear-gradient(135deg,#dedede,#fcfcfc);border:0.5px solid #bcbcbc"></div>
<div class="t" style="left:374.6px;top:319.95px;font-size:4.6px;color:#777">Mass 41</div>
<div class="tr" style="left:424.3px;top:319.95px;font-size:4.6px;color:#777">5.61e-13</div>
<div style="left:355px;top:325.328px;width:5px;height:5px;background:linear-gradient(135deg,#dedede,#fcfcfc);border:0.5px solid #bcbcbc"></div>
<div class="t" style="left:374.6px;top:327.94px;font-size:4.6px;color:#777">Mass 42</div>
<div class="tr" style="left:424.3px;top:327.94px;font-size:4.6px;color:#777">8.38e-10</div>
<div style="left:355px;top:333.212px;width:5px;height:5px;background:linear-gradient(135deg,#dedede,#fcfcfc);border:0.5px solid #bcbcbc"></div>
<div class="t" style="left:374.6px;top:335.95px;font-size:4.6px;color:#777">Mass 43</div>
<div class="tr" style="left:424.3px;top:335.95px;font-size:4.6px;color:#777">1.70e-10</div>
<div style="left:355px;top:341.096px;width:5px;height:5px;background:linear-gradient(135deg,#dedede,#fcfcfc);border:0.5px solid #bcbcbc"></div>
<div class="t" style="left:374.6px;top:342.95px;font-size:4.6px;color:#777">Mass 44</div>
<div class="tr" style="left:424.3px;top:342.95px;font-size:4.6px;color:#777">1.13e-09</div>
<div style="left:355px;top:348.98px;width:5px;height:5px;background:linear-gradient(135deg,#dedede,#fcfcfc);border:0.5px solid #bcbcbc"></div>
<div class="t" style="left:374.6px;top:350.94px;font-size:4.6px;color:#777">Mass 45</div>
<div class="tr" style="left:424.3px;top:350.94px;font-size:4.6px;color:#777">1.29e-10</div>
<div style="left:355px;top:356.86400000000003px;width:5px;height:5px;background:linear-gradient(135deg,#dedede,#fcfcfc);border:0.5px solid #bcbcbc"></div>
<div class="t" style="left:374.6px;top:358.95px;font-size:4.6px;color:#777">Mass 46</div>
<div class="tr" style="left:424.3px;top:358.95px;font-size:4.6px;color:#777">4.22e-11</div>
<div style="left:355px;top:364.748px;width:5px;height:5px;background:linear-gradient(135deg,#dedede,#fcfcfc);border:0.5px solid #bcbcbc"></div>
<div class="t" style="left:374.6px;top:366.94px;font-size:4.6px;color:#777">Mass 47</div>
<div class="tr" style="left:424.3px;top:366.94px;font-size:4.6px;color:#777">-3.93e-13</div>
<div style="left:355px;top:372.63199999999995px;width:5px;height:5px;background:linear-gradient(135deg,#dedede,#fcfcfc);border:0.5px solid #bcbcbc"></div>
<div class="t" style="left:374.6px;top:374.95px;font-size:4.6px;color:#777">Mass 48</div>
<div class="tr" style="left:424.3px;top:374.95px;font-size:4.6px;color:#777">2.62e-11</div>
<div style="left:355px;top:380.51599999999996px;width:5px;height:5px;background:linear-gradient(135deg,#dedede,#fcfcfc);border:0.5px solid #bcbcbc"></div>
<div class="t" style="left:374.6px;top:382.94px;font-size:4.6px;color:#777">Mass 49</div>
<div class="tr" style="left:424.3px;top:382.94px;font-size:4.6px;color:#777">6.17e-13</div>
<div style="left:355px;top:388.4px;width:5px;height:5px;background:linear-gradient(135deg,#dedede,#fcfcfc);border:0.5px solid #bcbcbc"></div>
<div class="t" style="left:374.6px;top:390.94px;font-size:4.6px;color:#777">Mass 50</div>
<div class="tr" style="left:424.3px;top:390.94px;font-size:4.6px;color:#777">3.00e-12</div>
<div style="left:425.6px;top:181px;width:6.8px;height:218.5px;background:#f0f0f0"></div>
<svg style="left:427.7px;top:183.39999999999998px" width="2.6" height="1.6" viewBox="0 0 2.6 1.6"><path d="M0 1.6L1.3 0L2.6 1.6Z" fill="#444"/></svg>
<svg style="left:427.7px;top:395.0px" width="2.6" height="1.6" viewBox="0 0 2.6 1.6"><path d="M0 0L1.3 1.6L2.6 0Z" fill="#444"/></svg>
<div style="left:426.2px;top:283px;width:5.6px;height:110px;background:linear-gradient(90deg,#f0f0f0,#dcdcdc);border:0.5px solid #b6b6b6;border-radius:1px"></div>
<div style="left:427.8px;top:336.9px;width:2.4px;height:0.5px;background:#888"></div>
<div style="left:427.8px;top:338.0px;width:2.4px;height:0.5px;background:#888"></div>
<div style="left:427.8px;top:339.1px;width:2.4px;height:0.5px;background:#888"></div>
<div style="left:353px;top:399.6px;width:79.4px;height:6.2px;background:#efefef"></div>
<svg style="left:355.7px;top:401.4px" width="1.6" height="2.6" viewBox="0 0 1.6 2.6"><path d="M1.6 0L0 1.3L1.6 2.6Z" fill="#555"/></svg>
<svg style="left:420.7px;top:401.4px" width="1.6" height="2.6" viewBox="0 0 1.6 2.6"><path d="M0 0L1.6 1.3L0 2.6Z" fill="#555"/></svg>
<div style="left:360px;top:400.1px;width:52.5px;height:5.3px;background:linear-gradient(#f2f2f2,#dcdcdc);border:0.5px solid #b6b6b6;border-radius:1px"></div>
<div style="left:384.9px;top:401.6px;width:0.5px;height:2.4px;background:#888"></div>
<div style="left:386.0px;top:401.6px;width:0.5px;height:2.4px;background:#888"></div>
<div style="left:387.1px;top:401.6px;width:0.5px;height:2.4px;background:#888"></div>
<div style="left:440px;top:155.4px;width:353.5px;height:251.4px;background:#f0f0f0;border:0.6px solid #808690"></div>
<div style="left:469.5px;top:158.5px;width:320px;height:220.5px;background:#fff;border-left:0.6px solid #777;border-bottom:0.6px solid #888"></div>
<div class="t" style="left:447.2px;top:159.94px;font-size:4.6px;color:#111">1x10</div>
<div class="t" style="left:458.6px;top:156.94px;font-size:3.2px;color:#111">-04</div>
<div style="left:465px;top:160.4px;width:4.5px;height:0.5px;background:#888"></div>
<div style="left:467.3px;top:162.17996638281028px;width:2.2px;height:0.4px;background:#aaa"></div>
<div style="left:467.3px;top:164.1697995060134px;width:2.2px;height:0.4px;background:#aaa"></div>
<div style="left:467.3px;top:166.42568624344543px;width:2.2px;height:0.4px;background:#aaa"></div>
<div style="left:467.3px;top:169.02991636007627px;width:2.2px;height:0.4px;background:#aaa"></div>
<div style="left:467.3px;top:172.11006683132888px;width:2.2px;height:0.4px;background:#aaa"></div>
<div style="left:467.3px;top:175.87986633734226px;width:2.2px;height:0.4px;background:#aaa"></div>
<div style="left:467.3px;top:180.73998319140514px;width:2.2px;height:0.4px;background:#aaa"></div>
<div style="left:467.3px;top:187.58993316867114px;width:2.2px;height:0.4px;background:#aaa"></div>
<div class="t" style="left:447.2px;top:198.95px;font-size:4.6px;color:#111">1x10</div>
<div class="t" style="left:458.6px;top:195.95px;font-size:3.2px;color:#111">-05</div>
<div style="left:465px;top:199.3px;width:4.5px;height:0.5px;background:#888"></div>
<div style="left:467.3px;top:201.07996638281028px;width:2.2px;height:0.4px;background:#aaa"></div>
<div style="left:467.3px;top:203.0697995060134px;width:2.2px;height:0.4px;background:#aaa"></div>
<div style="left:467.3px;top:205.32568624344543px;width:2.2px;height:0.4px;background:#aaa"></div>
<div style="left:467.3px;top:207.92991636007628px;width:2.2px;height:0.4px;background:#aaa"></div>
<div style="left:467.3px;top:211.01006683132888px;width:2.2px;height:0.4px;background:#aaa"></div>
<div style="left:467.3px;top:214.77986633734227px;width:2.2px;height:0.4px;background:#aaa"></div>
<div style="left:467.3px;top:219.63998319140515px;width:2.2px;height:0.4px;background:#aaa"></div>
<div style="left:467.3px;top:226.48993316867114px;width:2.2px;height:0.4px;background:#aaa"></div>
<div class="t" style="left:447.2px;top:236.94px;font-size:4.6px;color:#111">1x10</div>
<div class="t" style="left:458.6px;top:234.94px;font-size:3.2px;color:#111">-06</div>
<div style="left:465px;top:238.20000000000002px;width:4.5px;height:0.5px;background:#888"></div>
<div style="left:467.3px;top:239.9799663828103px;width:2.2px;height:0.4px;background:#aaa"></div>
<div style="left:467.3px;top:241.9697995060134px;width:2.2px;height:0.4px;background:#aaa"></div>
<div style="left:467.3px;top:244.22568624344544px;width:2.2px;height:0.4px;background:#aaa"></div>
<div style="left:467.3px;top:246.82991636007628px;width:2.2px;height:0.4px;background:#aaa"></div>
<div style="left:467.3px;top:249.9100668313289px;width:2.2px;height:0.4px;background:#aaa"></div>
<div style="left:467.3px;top:253.67986633734228px;width:2.2px;height:0.4px;background:#aaa"></div>
<div style="left:467.3px;top:258.53998319140516px;width:2.2px;height:0.4px;background:#aaa"></div>
<div style="left:467.3px;top:265.3899331686712px;width:2.2px;height:0.4px;background:#aaa"></div>
<div class="t" style="left:447.2px;top:275.95px;font-size:4.6px;color:#111">1x10</div>
<div class="t" style="left:458.6px;top:273.95px;font-size:3.2px;color:#111">-07</div>
<div style="left:465px;top:277.09999999999997px;width:4.5px;height:0.5px;background:#888"></div>
<div style="left:467.3px;top:278.8799663828102px;width:2.2px;height:0.4px;background:#aaa"></div>
<div style="left:467.3px;top:280.86979950601335px;width:2.2px;height:0.4px;background:#aaa"></div>
<div style="left:467.3px;top:283.1256862434454px;width:2.2px;height:0.4px;background:#aaa"></div>
<div style="left:467.3px;top:285.72991636007623px;width:2.2px;height:0.4px;background:#aaa"></div>
<div style="left:467.3px;top:288.8100668313288px;width:2.2px;height:0.4px;background:#aaa"></div>
<div style="left:467.3px;top:292.57986633734225px;width:2.2px;height:0.4px;background:#aaa"></div>
<div style="left:467.3px;top:297.4399831914051px;width:2.2px;height:0.4px;background:#aaa"></div>
<div style="left:467.3px;top:304.2899331686711px;width:2.2px;height:0.4px;background:#aaa"></div>
<div class="t" style="left:447.2px;top:314.94px;font-size:4.6px;color:#111">1x10</div>
<div class="t" style="left:458.6px;top:312.94px;font-size:3.2px;color:#111">-08</div>
<div style="left:465px;top:316.0px;width:4.5px;height:0.5px;background:#888"></div>
<div style="left:467.3px;top:317.77996638281024px;width:2.2px;height:0.4px;background:#aaa"></div>
<div style="left:467.3px;top:319.7697995060134px;width:2.2px;height:0.4px;background:#aaa"></div>
<div style="left:467.3px;top:322.0256862434454px;width:2.2px;height:0.4px;background:#aaa"></div>
<div style="left:467.3px;top:324.62991636007627px;width:2.2px;height:0.4px;background:#aaa"></div>
<div style="left:467.3px;top:327.71006683132885px;width:2.2px;height:0.4px;background:#aaa"></div>
<div style="left:467.3px;top:331.4798663373423px;width:2.2px;height:0.4px;background:#aaa"></div>
<div style="left:467.3px;top:336.3399831914051px;width:2.2px;height:0.4px;background:#aaa"></div>
<div style="left:467.3px;top:343.18993316867113px;width:2.2px;height:0.4px;background:#aaa"></div>
<div class="t" style="left:447.2px;top:353.94px;font-size:4.6px;color:#111">1x10</div>
<div class="t" style="left:458.6px;top:351.94px;font-size:3.2px;color:#111">-09</div>
<div style="left:465px;top:354.9px;width:4.5px;height:0.5px;background:#888"></div>
<div style="left:467.3px;top:356.6799663828102px;width:2.2px;height:0.4px;background:#aaa"></div>
<div style="left:467.3px;top:358.66979950601336px;width:2.2px;height:0.4px;background:#aaa"></div>
<div style="left:467.3px;top:360.9256862434454px;width:2.2px;height:0.4px;background:#aaa"></div>
<div style="left:467.3px;top:363.52991636007624px;width:2.2px;height:0.4px;background:#aaa"></div>
<div style="left:467.3px;top:366.6100668313288px;width:2.2px;height:0.4px;background:#aaa"></div>
<div style="left:467.3px;top:370.37986633734226px;width:2.2px;height:0.4px;background:#aaa"></div>
<div style="left:467.3px;top:375.2399831914051px;width:2.2px;height:0.4px;background:#aaa"></div>
<div class="tc" style="left:444.6px;top:268.4px;font-size:5.3px;color:#111;transform:translateX(-50%) rotate(-90deg)">Pressure Torr</div>
<div style="left:477.65000000000003px;top:340.7px;width:3.9px;height:38.10000000000002px;background:#0000f0"></div>
<div style="left:554.27px;top:258.2px;width:3.9px;height:120.60000000000002px;background:#0000f0"></div>
<div style="left:560.655px;top:331.2px;width:3.9px;height:47.60000000000002px;background:#0000f0"></div>
<div style="left:567.04px;top:288px;width:3.9px;height:90.80000000000001px;background:#0000f0"></div>
<div style="left:573.425px;top:305px;width:3.9px;height:73.80000000000001px;background:#0000f0"></div>
<div style="left:579.81px;top:281.7px;width:3.9px;height:97.10000000000002px;background:#0000f0"></div>
<div style="left:586.1949999999999px;top:360.5px;width:3.9px;height:18.30000000000001px;background:#0000f0"></div>
<div style="left:592.5799999999999px;top:316.7px;width:3.9px;height:62.10000000000002px;background:#0000f0"></div>
<div style="left:643.66px;top:208px;width:3.9px;height:170.8px;background:#0000f0"></div>
<div style="left:650.045px;top:291.7px;width:3.9px;height:87.10000000000002px;background:#0000f0"></div>
<div style="left:656.43px;top:338.3px;width:3.9px;height:40.5px;background:#0000f0"></div>
<div style="left:662.8149999999999px;top:338.3px;width:3.9px;height:40.5px;background:#0000f0"></div>
<div style="left:669.1999999999999px;top:232px;width:3.9px;height:146.8px;background:#0000f0"></div>
<div style="left:675.585px;top:320.5px;width:3.9px;height:58.30000000000001px;background:#0000f0"></div>
<div style="left:681.97px;top:329.2px;width:3.9px;height:49.60000000000002px;background:#0000f0"></div>
<div style="left:694.74px;top:377.4px;width:3.9px;height:1.400000000000034px;background:#0000f0"></div>
<div style="left:720.28px;top:281.7px;width:3.9px;height:97.10000000000002px;background:#0000f0"></div>
<div style="left:733.05px;top:357.5px;width:3.9px;height:21.30000000000001px;background:#0000f0"></div>
<div style="left:745.8199999999999px;top:352.5px;width:3.9px;height:26.30000000000001px;background:#0000f0"></div>
<div style="left:529.48px;top:384.6px;width:2.4px;height:1px;background:#1018d0"></div>
<div style="left:479.35px;top:379px;width:0.5px;height:2.2px;background:#555"></div>
<div style="left:485.735px;top:379px;width:0.5px;height:1.3px;background:#555"></div>
<div style="left:492.12px;top:379px;width:0.5px;height:2.2px;background:#555"></div>
<div style="left:498.505px;top:379px;width:0.5px;height:1.3px;background:#555"></div>
<div style="left:504.89000000000004px;top:379px;width:0.5px;height:2.2px;background:#555"></div>
<div style="left:511.27500000000003px;top:379px;width:0.5px;height:1.3px;background:#555"></div>
<div style="left:517.6600000000001px;top:379px;width:0.5px;height:2.2px;background:#555"></div>
<div style="left:524.0450000000001px;top:379px;width:0.5px;height:1.3px;background:#555"></div>
<div style="left:530.4300000000001px;top:379px;width:0.5px;height:2.2px;background:#555"></div>
<div style="left:536.815px;top:379px;width:0.5px;height:1.3px;background:#555"></div>
<div style="left:543.2px;top:379px;width:0.5px;height:2.2px;background:#555"></div>
<div style="left:549.585px;top:379px;width:0.5px;height:1.3px;background:#555"></div>
<div style="left:555.97px;top:379px;width:0.5px;height:2.2px;background:#555"></div>
<div style="left:562.355px;top:379px;width:0.5px;height:1.3px;background:#555"></div>
<div style="left:568.74px;top:379px;width:0.5px;height:2.2px;background:#555"></div>
<div style="left:575.125px;top:379px;width:0.5px;height:1.3px;background:#555"></div>
<div style="left:581.51px;top:379px;width:0.5px;height:2.2px;background:#555"></div>
<div style="left:587.895px;top:379px;width:0.5px;height:1.3px;background:#555"></div>
<div style="left:594.28px;top:379px;width:0.5px;height:2.2px;background:#555"></div>
<div style="left:600.665px;top:379px;width:0.5px;height:1.3px;background:#555"></div>
<div style="left:607.05px;top:379px;width:0.5px;height:2.2px;background:#555"></div>
<div style="left:613.4350000000001px;top:379px;width:0.5px;height:1.3px;background:#555"></div>
<div style="left:619.82px;top:379px;width:0.5px;height:2.2px;background:#555"></div>
<div style="left:626.205px;top:379px;width:0.5px;height:1.3px;background:#555"></div>
<div style="left:632.59px;top:379px;width:0.5px;height:2.2px;background:#555"></div>
<div style="left:638.975px;top:379px;width:0.5px;height:1.3px;background:#555"></div>
<div style="left:645.36px;top:379px;width:0.5px;height:2.2px;background:#555"></div>
<div style="left:651.745px;top:379px;width:0.5px;height:1.3px;background:#555"></div>
<div style="left:658.13px;top:379px;width:0.5px;height:2.2px;background:#555"></div>
<div style="left:664.515px;top:379px;width:0.5px;height:1.3px;background:#555"></div>
<div style="left:670.9px;top:379px;width:0.5px;height:2.2px;background:#555"></div>
<div style="left:677.2850000000001px;top:379px;width:0.5px;height:1.3px;background:#555"></div>
<div style="left:683.6700000000001px;top:379px;width:0.5px;height:2.2px;background:#555"></div>
<div style="left:690.0550000000001px;top:379px;width:0.5px;height:1.3px;background:#555"></div>
<div style="left:696.44px;top:379px;width:0.5px;height:2.2px;background:#555"></div>
<div style="left:702.825px;top:379px;width:0.5px;height:1.3px;background:#555"></div>
<div style="left:709.21px;top:379px;width:0.5px;height:2.2px;background:#555"></div>
<div style="left:715.595px;top:379px;width:0.5px;height:1.3px;background:#555"></div>
<div style="left:721.98px;top:379px;width:0.5px;height:2.2px;background:#555"></div>
<div style="left:728.365px;top:379px;width:0.5px;height:1.3px;background:#555"></div>
<div style="left:734.75px;top:379px;width:0.5px;height:2.2px;background:#555"></div>
<div style="left:741.135px;top:379px;width:0.5px;height:1.3px;background:#555"></div>
<div style="left:747.52px;top:379px;width:0.5px;height:2.2px;background:#555"></div>
<div style="left:753.905px;top:379px;width:0.5px;height:1.3px;background:#555"></div>
<div style="left:760.29px;top:379px;width:0.5px;height:2.2px;background:#555"></div>
<div style="left:766.675px;top:379px;width:0.5px;height:1.3px;background:#555"></div>
<div style="left:773.06px;top:379px;width:0.5px;height:2.2px;background:#555"></div>
<div style="left:779.4449999999999px;top:379px;width:0.5px;height:1.3px;background:#555"></div>
<div style="left:785.83px;top:379px;width:0.5px;height:2.2px;background:#555"></div>
<div class="tc" style="left:479.6px;top:388.94px;font-size:5.2px;color:#111">2</div>
<div class="tc" style="left:492.37px;top:388.94px;font-size:5.2px;color:#111">4</div>
<div class="tc" style="left:505.14000000000004px;top:388.94px;font-size:5.2px;color:#111">6</div>
<div class="tc" style="left:517.9100000000001px;top:388.94px;font-size:5.2px;color:#111">8</div>
<div class="tc" style="left:530.6800000000001px;top:388.94px;font-size:5.2px;color:#111">10</div>
<div class="tc" style="left:543.45px;top:388.94px;font-size:5.2px;color:#111">12</div>
<div class="tc" style="left:556.22px;top:388.94px;font-size:5.2px;color:#111">14</div>
<div class="tc" style="left:568.99px;top:388.94px;font-size:5.2px;color:#111">16</div>
<div class="tc" style="left:581.76px;top:388.94px;font-size:5.2px;color:#111">18</div>
<div class="tc" style="left:594.53px;top:388.94px;font-size:5.2px;color:#111">20</div>
<div class="tc" style="left:607.3px;top:388.94px;font-size:5.2px;color:#111">22</div>
<div class="tc" style="left:620.07px;top:388.94px;font-size:5.2px;color:#111">24</div>
<div class="tc" style="left:632.84px;top:388.94px;font-size:5.2px;color:#111">26</div>
<div class="tc" style="left:645.61px;top:388.94px;font-size:5.2px;color:#111">28</div>
<div class="tc" style="left:658.38px;top:388.94px;font-size:5.2px;color:#111">30</div>
<div class="tc" style="left:671.15px;top:388.94px;font-size:5.2px;color:#111">32</div>
<div class="tc" style="left:683.9200000000001px;top:388.94px;font-size:5.2px;color:#111">34</div>
<div class="tc" style="left:696.69px;top:388.94px;font-size:5.2px;color:#111">36</div>
<div class="tc" style="left:709.46px;top:388.94px;font-size:5.2px;color:#111">38</div>
<div class="tc" style="left:722.23px;top:388.94px;font-size:5.2px;color:#111">40</div>
<div class="tc" style="left:735.0px;top:388.94px;font-size:5.2px;color:#111">42</div>
<div class="tc" style="left:747.77px;top:388.94px;font-size:5.2px;color:#111">44</div>
<div class="tc" style="left:760.54px;top:388.94px;font-size:5.2px;color:#111">46</div>
<div class="tc" style="left:773.31px;top:388.94px;font-size:5.2px;color:#111">48</div>
<div class="tc" style="left:786.08px;top:388.94px;font-size:5.2px;color:#111">50</div>
<div class="tc" style="left:629.5px;top:394.95px;font-size:5.2px;color:#111">Scan 135</div>
<div style="left:440.6px;top:399.2px;width:352.4px;height:7px;background:#f4f4f4;border-top:0.6px solid #d0d4dc"></div>
<svg style="left:442.7px;top:401.5px" width="1.6" height="2.6" viewBox="0 0 1.6 2.6"><path d="M1.6 0L0 1.3L1.6 2.6Z" fill="#444"/></svg>
<svg style="left:788.0px;top:401.5px" width="1.6" height="2.6" viewBox="0 0 1.6 2.6"><path d="M0 0L1.6 1.3L0 2.6Z" fill="#444"/></svg>
<div style="left:779px;top:400.3px;width:5.5px;height:4.8px;background:linear-gradient(#fafafa,#dcdcdc);border:0.5px solid #a8a8a8;border-radius:1px"></div>
<div style="left:1px;top:410.5px;width:798px;height:93.5px;background:#f0f0f0"></div>
<div style="left:1px;top:410.3px;width:798px;height:1.2px;background:linear-gradient(#fafafa,#e4e4e4)"></div>
<div style="left:1px;top:411.5px;width:798px;height:4px;background:linear-gradient(#f6f6f6,#dcdcdc)"></div>
<div style="left:1.6px;top:415.5px;width:8px;height:75px;background:#f7f7f7"></div>
<div style="left:5.4px;top:420px;width:0.5px;height:70px;background:#cdcdcd"></div>
<div style="left:3px;top:414.4px;width:5.2px;height:5.2px;background:#f6f6f6;border:0.6px solid #8a8a8a"><div style="left:1.6px;top:2.2px;width:1.8px;height:0.8px;background:#444"></div></div>
<div style="left:9.5px;top:415.6px;width:785.6px;height:66.2px;background:#24396b;border-top:0.6px solid #1a2a50;border-left:0.6px solid #1a2a50"></div>
<div class="t" style="left:12px;top:422.11px;font-size:6.2px;font-weight:bold;color:#e9e13e;font-family:'DejaVu Sans','Liberation Sans',sans-serif;text-decoration:underline;text-decoration-thickness:0.6px;text-underline-offset:0.7px;line-height:8px;margin-top:-4.1px;letter-spacing:-0.05px">Recipe</div>
<div style="left:22px;top:425.2px;width:15.6px;height:6.4px;background:#aeb7cc;overflow:hidden"><div class="t" style="left:0.8px;top:2.9px;font-size:3.2px;color:#f4f6fa;">Barchart ...</div></div>
<div class="t" style="left:12px;top:436.10px;font-size:5.5px;font-weight:bold;color:#e9e13e;font-family:'DejaVu Sans','Liberation Sans',sans-serif;text-decoration:underline;text-decoration-thickness:0.6px;text-underline-offset:0.7px;line-height:8px;margin-top:-4.1px;letter-spacing:-0.05px">Instruments</div>
<div style="left:11.5px;top:442.2px;width:2px;height:0.5px;background:#8a96b4"></div>
<div style="left:20.6px;top:442.2px;width:2px;height:0.5px;background:#8a96b4"></div>
<div style="left:14px;top:440.4px;width:6.4px;height:4.2px;background:#0a0a0a;border-radius:1.2px"><div style="left:0.8px;top:1.3px;width:4px;height:0.8px;background:#e8e8a0"></div></div>
<div class="t" style="left:24px;top:441.94px;font-size:5px;font-weight:bold;color:#f0f2f8">MV2</div>
<div class="t" style="left:24px;top:446.95px;font-size:3.55px;font-family:'DejaVu Sans','Liberation Sans',sans-serif;color:#d0d6e6;font-size:3.75px">MKS104-91017001</div>
<div class="t" style="left:24px;top:452.95px;font-size:3.55px;font-family:'DejaVu Sans','Liberation Sans',sans-serif;color:#8f9bbc">Filament No: <span style="color:#eef0f8">1</span></div>
<div class="t" style="left:24px;top:457.94px;font-size:3.55px;font-family:'DejaVu Sans','Liberation Sans',sans-serif;color:#8f9bbc">Filament Status: <span style="color:#eef0f8">On</span></div>
<div class="t" style="left:24px;top:462.94px;font-size:3.55px;font-family:'DejaVu Sans','Liberation Sans',sans-serif;color:#8f9bbc">Status: <span style="color:#eef0f8">Scanning BarChart1</span></div>
<div class="t" style="left:82px;top:422.60px;font-size:8.3px;color:#dfe045;line-height:10px;margin-top:-4.6px;letter-spacing:0.02px;-webkit-text-stroke:0.22px #dfe045">Recipe Information</div>
<div style="left:786px;top:420px;width:7.6px;height:6.6px;background:#f4f4f4;border:0.6px solid #c8c8c8"></div>
<svg style="left:787.6px;top:421.2px" width="4.4" height="4.2" viewBox="0 0 4.4 4.2"><path d="M0.4 0.4L4 3.8M4 0.4L0.4 3.8" stroke="#111" stroke-width="1.3"/></svg>
<div style="left:79.6px;top:430px;width:715.7px;height:53.4px;background:#fff;border-radius:4px 0 0 0"></div>
<div class="t" style="left:87.4px;top:433.95px;font-size:5.6px;font-weight:bold;color:#27386f;font-family:'DejaVu Sans','Liberation Sans',sans-serif;letter-spacing:-0.15px">Alarms</div>
<div style="left:82.4px;top:439.8px;width:696.8000000000001px;height:26.9px;background:#fff;border:0.5px solid #b2b2b2"></div>
<div style="left:82.4px;top:439.8px;width:696.8000000000001px;height:6.9px;background:#ececec;border:0.5px solid #b2b2b2"></div>
<div style="left:82.4px;top:453.3px;width:696.8000000000001px;height:0.5px;background:#b2b2b2"></div>
<div style="left:82.4px;top:460.0px;width:696.8000000000001px;height:0.5px;background:#b2b2b2"></div>
<div style="left:105px;top:439.8px;width:0.5px;height:26.9px;background:#b2b2b2"></div>
<div style="left:116.3px;top:439.8px;width:0.5px;height:26.9px;background:#b2b2b2"></div>
<div style="left:318px;top:439.8px;width:0.5px;height:26.9px;background:#b2b2b2"></div>
<div style="left:541.8px;top:439.8px;width:0.5px;height:26.9px;background:#b2b2b2"></div>
<div style="left:660px;top:439.8px;width:0.5px;height:26.9px;background:#b2b2b2"></div>
<div class="t" style="left:83.2px;top:443.95px;font-size:4.5px;font-weight:bold;color:#111;font-family:'DejaVu Sans','Liberation Sans',sans-serif;letter-spacing:-0.2px">Category</div>
<div class="t" style="left:106.3px;top:443.95px;font-size:4.5px;font-weight:bold;color:#111;font-family:'DejaVu Sans','Liberation Sans',sans-serif;letter-spacing:-0.2px">Ack</div>
<div class="tc" style="left:217px;top:443.95px;font-size:4.5px;font-weight:bold;color:#111;font-family:'DejaVu Sans','Liberation Sans',sans-serif;letter-spacing:-0.2px">EventText</div>
<div class="tc" style="left:430px;top:443.95px;font-size:4.5px;font-weight:bold;color:#111;font-family:'DejaVu Sans','Liberation Sans',sans-serif;letter-spacing:-0.2px">UserText</div>
<div class="tc" style="left:601px;top:443.95px;font-size:4.5px;font-weight:bold;color:#111;font-family:'DejaVu Sans','Liberation Sans',sans-serif;letter-spacing:-0.2px">StartTime</div>
<div class="tc" style="left:719.5px;top:443.95px;font-size:4.5px;font-weight:bold;color:#111;font-family:'DejaVu Sans','Liberation Sans',sans-serif;letter-spacing:-0.2px">EndTime</div>
<svg style="left:91.1px;top:447.3px" width="5.8" height="5.8" viewBox="0 0 5.8 5.8"><circle cx="2.9" cy="2.9" r="2.7" fill="#1a28d0" stroke="#0a1478" stroke-width="0.5"/><circle cx="2.9" cy="1.5" r="0.55" fill="#fff"/><path d="M2.9 2.4V4.5" stroke="#fff" stroke-width="1"/></svg>
<div class="tc" style="left:217px;top:449.95px;font-size:4.4px;color:#222">Message</div>
<div class="tc" style="left:430px;top:449.95px;font-size:4.4px;color:#222">Scan is 132. Digitals are : 1</div>
<div class="tc" style="left:601px;top:449.95px;font-size:4.4px;color:#222">11/10/2017 15:17:00</div>
<div class="tc" style="left:719.5px;top:449.95px;font-size:4.4px;color:#222">No Time Specified</div>
<svg style="left:91.1px;top:453.95px" width="5.8" height="5.8" viewBox="0 0 5.8 5.8"><circle cx="2.9" cy="2.9" r="2.7" fill="#1a28d0" stroke="#0a1478" stroke-width="0.5"/><circle cx="2.9" cy="1.5" r="0.55" fill="#fff"/><path d="M2.9 2.4V4.5" stroke="#fff" stroke-width="1"/></svg>
<div class="tc" style="left:217px;top:455.94px;font-size:4.4px;color:#222">Message</div>
<div class="tc" style="left:430px;top:455.94px;font-size:4.4px;color:#222">Scan is 133. Digitals are : 1</div>
<div class="tc" style="left:601px;top:455.94px;font-size:4.4px;color:#222">11/10/2017 15:17:03</div>
<div class="tc" style="left:719.5px;top:455.94px;font-size:4.4px;color:#222">No Time Specified</div>
<svg style="left:91.1px;top:460.6px" width="5.8" height="5.8" viewBox="0 0 5.8 5.8"><circle cx="2.9" cy="2.9" r="2.7" fill="#1a28d0" stroke="#0a1478" stroke-width="0.5"/><circle cx="2.9" cy="1.5" r="0.55" fill="#fff"/><path d="M2.9 2.4V4.5" stroke="#fff" stroke-width="1"/></svg>
<div class="tc" style="left:217px;top:462.94px;font-size:4.4px;color:#222">Message</div>
<div class="tc" style="left:430px;top:462.94px;font-size:4.4px;color:#222">Scan is 134. Digitals are : 1</div>
<div class="tc" style="left:601px;top:462.94px;font-size:4.4px;color:#222">11/10/2017 15:17:07</div>
<div class="tc" style="left:719.5px;top:462.94px;font-size:4.4px;color:#222">No Time Specified</div>
<div style="left:779.7px;top:439.8px;width:6.6px;height:40.8px;background:#f4f4f4"></div>
<svg style="left:781.7px;top:442.2px" width="2.6" height="1.6" viewBox="0 0 2.6 1.6"><path d="M0 1.6L1.3 0L2.6 1.6Z" fill="#444"/></svg>
<svg style="left:781.7px;top:477.2px" width="2.6" height="1.6" viewBox="0 0 2.6 1.6"><path d="M0 0L1.3 1.6L2.6 0Z" fill="#444"/></svg>
<div style="left:780.4px;top:468.4px;width:5.4px;height:5.8px;background:linear-gradient(90deg,#f4f4f4,#dcdcdc);border:0.5px solid #9a9a9a;border-radius:1px"></div>
<div style="left:85px;top:473.6px;width:4.6px;height:4.6px;background:#f4f4f4;border:0.6px solid #7a7a7a"></div>
<svg style="left:85.6px;top:474px" width="3.6" height="3.6" viewBox="0 0 3.6 3.6"><path d="M0.4 1.8L1.4 3L3.3 0.4" fill="none" stroke="#222" stroke-width="0.8"/></svg>
<div class="t" style="left:91.4px;top:477.94px;font-size:4.5px;font-weight:bold;color:#333;font-family:'DejaVu Sans','Liberation Sans',sans-serif;letter-spacing:-0.2px">Always Show latest Alarm(s)</div>
<div style="left:164px;top:473.6px;width:4.6px;height:4.6px;background:linear-gradient(135deg,#e0e0e0,#fafafa);border:0.6px solid #8a8a8a"></div>
<div class="t" style="left:170.6px;top:477.94px;font-size:4.7px;font-weight:bold;color:#111;font-family:'DejaVu Sans','Liberation Sans',sans-serif;letter-spacing:-0.2px">Acknowledge All</div>
<div class="tr" style="left:778px;top:477.95px;font-size:4.7px;font-weight:bold;color:#222;font-family:'DejaVu Sans','Liberation Sans',sans-serif;letter-spacing:-0.2px">Records 98 to 100 of 100</div>
<div style="left:9.5px;top:482px;width:786px;height:8.6px;background:#ececec;border-top:0.6px solid #8a8a8a"></div>
<div style="left:10px;top:482.6px;width:7px;height:7.2px;background:#f8f8f8;border:0.5px solid #b0b0b0"></div>
<svg style="left:12.7px;top:484.9px" width="1.6" height="2.6" viewBox="0 0 1.6 2.6"><path d="M1.6 0L0 1.3L1.6 2.6Z" fill="#9a9a9a"/></svg>
<div style="left:17px;top:482.6px;width:7px;height:7.2px;background:#f8f8f8;border:0.5px solid #b0b0b0"></div>
<svg style="left:19.7px;top:484.9px" width="1.6" height="2.6" viewBox="0 0 1.6 2.6"><path d="M1.6 0L0 1.3L1.6 2.6Z" fill="#9a9a9a"/></svg>
<div style="left:24px;top:482.6px;width:7px;height:7.2px;background:#f8f8f8;border:0.5px solid #b0b0b0"></div>
<svg style="left:26.7px;top:484.9px" width="1.6" height="2.6" viewBox="0 0 1.6 2.6"><path d="M0 0L1.6 1.3L0 2.6Z" fill="#9a9a9a"/></svg>
<div style="left:31px;top:482.6px;width:7px;height:7.2px;background:#f8f8f8;border:0.5px solid #b0b0b0"></div>
<svg style="left:33.7px;top:484.9px" width="1.6" height="2.6" viewBox="0 0 1.6 2.6"><path d="M0 0L1.6 1.3L0 2.6Z" fill="#9a9a9a"/></svg>
<div style="left:11.4px;top:484.7px;width:0.6px;height:3px;background:#9a9a9a"></div>
<div style="left:35px;top:484.7px;width:0.6px;height:3px;background:#9a9a9a"></div>
<svg style="left:38px;top:482.9px" width="104" height="8" viewBox="0 0 104 8"><path d="M0 0.3L1.4 1.6L3 7.4H18.4L20.6 0.3" fill="#f4f4f4" stroke="#555" stroke-width="0.5"/><path d="M18.4 7.4L20 2.4L21.8 7.6H100.4L103.4 0.3H20.6" fill="#fff" stroke="none"/><path d="M100.4 7.5L103.4 0.3" fill="none" stroke="#444" stroke-width="0.6"/><path d="M21.8 7.5H100.4" stroke="#444" stroke-width="0.5"/></svg>
<div class="t" style="left:43.6px;top:485.94px;font-size:4.6px;color:#333">Main</div>
<div class="t" style="left:61px;top:486.94px;font-size:4.5px;font-weight:bold;color:#111;font-family:'DejaVu Sans','Liberation Sans',sans-serif;letter-spacing:-0.21px">Barchart With Trend Interactive</div>
<div style="left:1px;top:490.6px;width:798px;height:10px;background:#f0f0f0;border-top:0.6px solid #d4d4d4"></div>
<div style="left:1px;top:491.6px;width:798px;height:0.6px;background:#fcfcfc"></div>
<div class="t" style="left:2.4px;top:497.94px;font-size:4.8px;color:#333">Done</div>
<div class="t" style="left:713px;top:497.94px;font-size:4.8px;color:#444">Pressure in Torr</div>
<div class="t" style="left:770px;top:497.94px;font-size:4.8px;color:#444">NUM</div>
<div style="left:708px;top:493px;width:0.5px;height:7px;background:#e6e6e6"></div>
<div style="left:760px;top:493px;width:0.5px;height:7px;background:#e6e6e6"></div>
<div style="left:0px;top:500.6px;width:800px;height:3.4px;background:linear-gradient(90deg,#7f8fae,#a9b6d2 12%,#b4c0da 60%,#8c9abb 85%,#56648a);"></div>
<div style="left:0px;top:500.6px;width:800px;height:0.6px;background:rgba(255,255,255,.45)"></div>
<div style="left:103.8px;top:501px;width:23.6px;height:3px;background:#dfe6f3;border:0.5px solid #f2f5fb;border-bottom:none;border-radius:1px 1px 0 0"></div>
<div style="left:108.6px;top:501.9px;width:13.8px;height:2.4px;border:0.5px solid #5868b8;border-bottom:none;background:#f2f5fb"></div>
<div style="left:128.4px;top:501px;width:23.6px;height:3px;background:#d3dcee;border:0.5px solid #eaeff8;border-bottom:none;border-radius:1px 1px 0 0"></div>
<div style="left:142.2px;top:502px;width:3.6px;height:2px;background:#283070;border-radius:1.8px 1.8px 0 0"></div>
<div style="left:3px;top:501.4px;width:22px;height:2.6px;background:#9aa8c4;border-radius:8px 8px 0 0;opacity:.7"></div>
<div style="left:1px;top:96.2px;width:796.7px;height:407.8px;border:0.6px solid #b4c0d6;border-bottom:none;background:none;pointer-events:none"></div>
</div>
</body></html>
